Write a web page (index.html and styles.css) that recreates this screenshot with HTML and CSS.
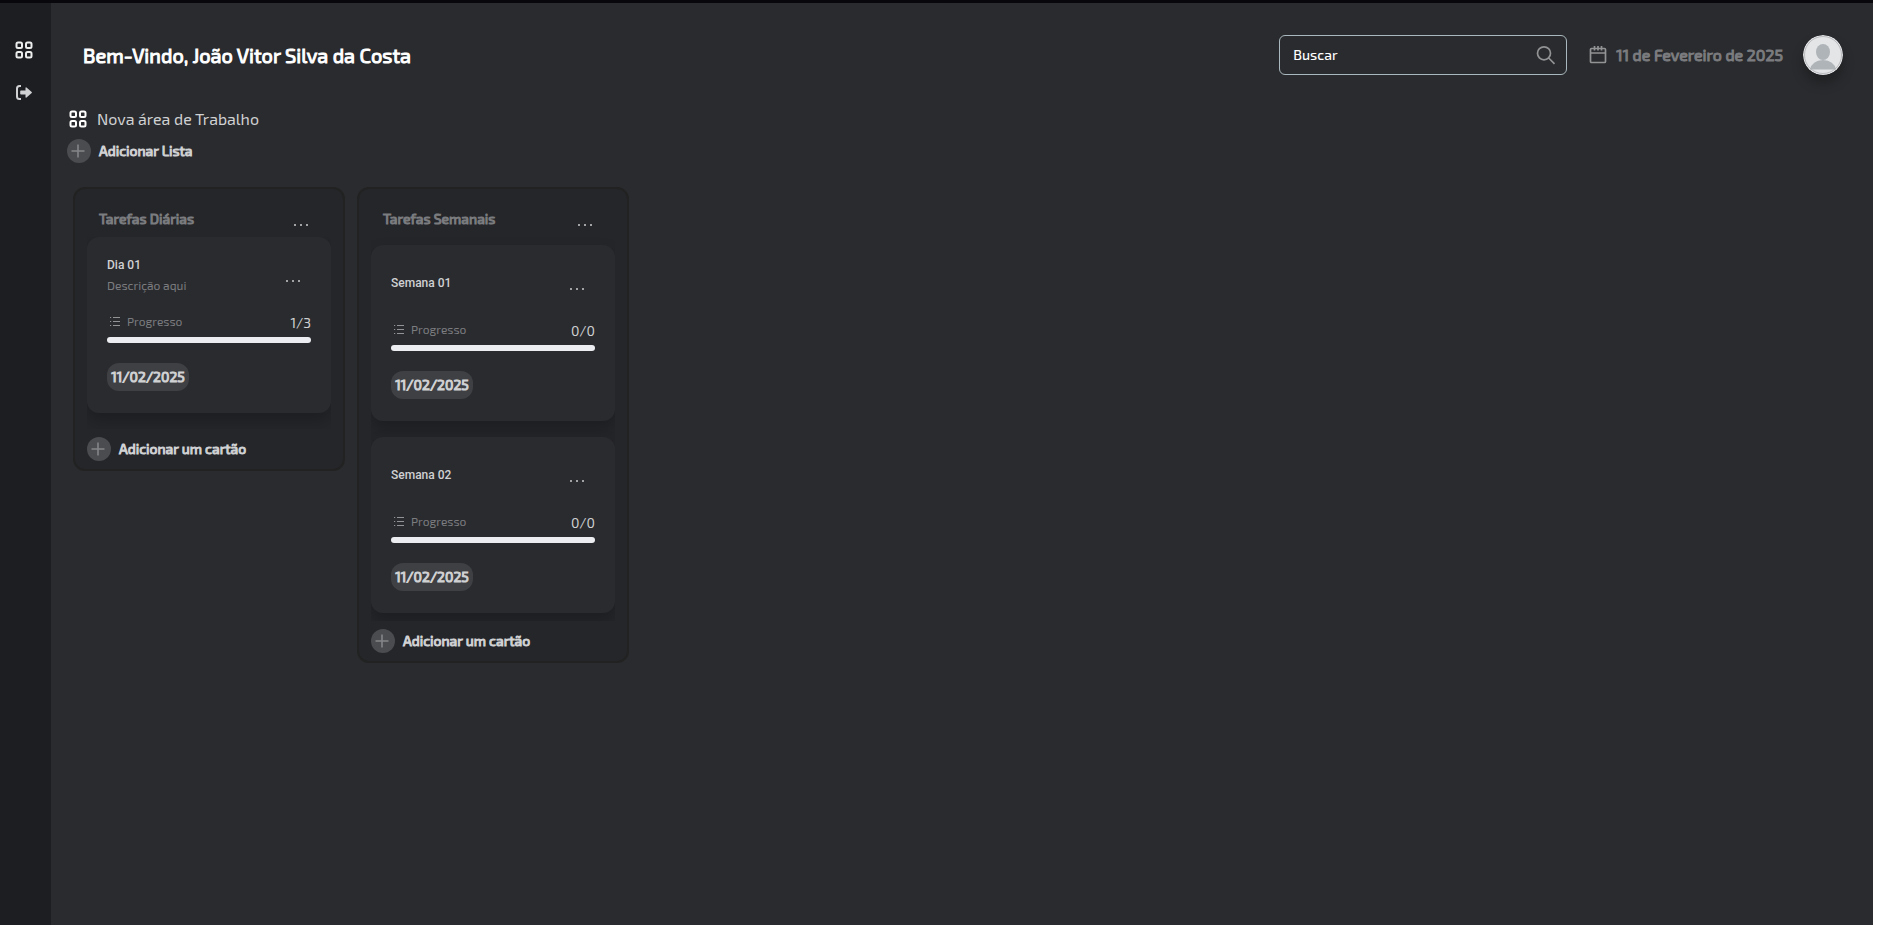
FILE: index.html
```html
<!doctype html>
<html lang="pt-BR">
<head>
<meta charset="utf-8">
<meta name="viewport" content="width=device-width, initial-scale=1">
<title>Área de Trabalho</title>
<link rel="stylesheet" href="styles.css">
</head>
<body>
<svg class="sprite">
	<symbol id="grid" viewBox="0 0 18 18">
		<g fill="none" stroke="currentColor" stroke-width="2">
			<rect x="1.5" y="1.5" width="5.5" height="5.5" rx="1.5"/>
			<rect x="11" y="1.5" width="5.5" height="5.5" rx="1.5"/>
			<rect x="1.5" y="11" width="5.5" height="5.5" rx="1.5"/>
			<rect x="11" y="11" width="5.5" height="5.5" rx="1.5"/>
		</g>
	</symbol>
	<symbol id="plus" viewBox="0 0 24 24">
		<path d="M11 5.500v13M4.500 12h13" stroke="currentColor" stroke-width="1.6" fill="none"/>
	</symbol>
	<symbol id="list" viewBox="0 0 12 12">
		<path d="M4 1.500h7M4 5.500h7M4 9.500h7M1 1.500h1.200M1 5.500h1.200M1 9.500h1.200" stroke="currentColor" stroke-width="1" fill="none"/>
	</symbol>
</svg>
<div class="app">
	<nav class="sidebar">
		<a href="#" aria-label="Áreas"><svg class="icon"><use href="#grid"/></svg></a>
		<a href="#" class="logout" aria-label="Sair">
			<svg class="icon" viewBox="0 0 18 18">
				<path d="M6 3H4.500Q2 3 2 5.500v8Q2 16 4.500 16H6" fill="none" stroke="currentColor" stroke-width="2"/>
				<path d="M6 7.500h4.500V4.800q.2-.8 1-.3l5.200 4.500q.5.500 0 1l-5.200 4.500q-.8.500-1-.3V11.500H6q-.8 0-.8-.8V8.300q0-.8.8-.8z" fill="currentColor"/>
			</svg>
		</a>
	</nav>
	<div class="main">
		<header class="topbar">
			<h1>Bem-Vindo, João Vitor Silva da Costa</h1>
			<form class="search">
				<input type="search" placeholder="Buscar" aria-label="Buscar">
				<button type="button" aria-label="Pesquisar">
					<svg viewBox="0 0 20 20"><path d="M14.500 8.300A6.500 6.500 0 1 1 1.500 8.300a6.500 6.500 0 0 1 13 0zM12.700 13l5.800 5.800" fill="none" stroke="currentColor" stroke-width="1.700"/></svg>
				</button>
			</form>
			<div class="today">
				<svg viewBox="0 0 18 20"><path d="M2.500 3.500h13q1 0 1 1v12q0 1-1 1h-13q-1 0-1-1v-12q0-1 1-1zM1.500 8h15M5.500 1v4.500M9 1v4.500M12.500 1v4.500" fill="none" stroke="currentColor" stroke-width="1.700"/></svg>
				<span>11 de Fevereiro de 2025</span>
			</div>
			<svg class="avatar" viewBox="0 0 40 40">
				<circle cx="20" cy="20" r="20" fill="#e4e5e7"/>
				<ellipse cx="20" cy="17" rx="7" ry="8" fill="#aeb4b8"/>
				<path d="M7 34.500q2-9 13-9.500 11 .5 13 9.500z" fill="#aeb4b8"/>
				<circle cx="20" cy="20" r="18.500" fill="none" stroke="#a9abad" stroke-width=".7"/>
			</svg>
		</header>
		<div class="workspace">
			<svg class="icon"><use href="#grid"/></svg>
			<h2>Nova área de Trabalho</h2>
		</div>
		<button class="add"><svg><use href="#plus"/></svg><span>Adicionar Lista</span></button>
		<div class="board">
			<section class="column">
				<div class="column-head">
					<h3>Tarefas Diárias</h3>
					<button class="more" aria-label="Opções da lista"><i></i><i></i><i></i></button>
				</div>
				<div class="cards described">
					<article class="card">
						<div class="card-head">
							<div>
								<h4>Dia 01</h4>
								<p>Descrição aqui</p>
							</div>
							<button class="more" aria-label="Opções do cartão"><i></i><i></i><i></i></button>
						</div>
						<div class="progress">
							<svg><use href="#list"/></svg>
							<span>Progresso</span>
							<b>1/3</b>
						</div>
						<div class="bar"></div>
						<time class="date">11/02/2025</time>
					</article>
				</div>
				<button class="add"><svg><use href="#plus"/></svg><span>Adicionar um cartão</span></button>
			</section>
			<section class="column">
				<div class="column-head">
					<h3>Tarefas Semanais</h3>
					<button class="more" aria-label="Opções da lista"><i></i><i></i><i></i></button>
				</div>
				<div class="cards">
					<article class="card">
						<div class="card-head">
							<h4>Semana 01</h4>
							<button class="more" aria-label="Opções do cartão"><i></i><i></i><i></i></button>
						</div>
						<div class="progress">
							<svg><use href="#list"/></svg>
							<span>Progresso</span>
							<b>0/0</b>
						</div>
						<div class="bar"></div>
						<time class="date">11/02/2025</time>
					</article>
					<article class="card">
						<div class="card-head">
							<h4>Semana 02</h4>
							<button class="more" aria-label="Opções do cartão"><i></i><i></i><i></i></button>
						</div>
						<div class="progress">
							<svg><use href="#list"/></svg>
							<span>Progresso</span>
							<b>0/0</b>
						</div>
						<div class="bar"></div>
						<time class="date">11/02/2025</time>
					</article>
				</div>
				<button class="add"><svg><use href="#plus"/></svg><span>Adicionar um cartão</span></button>
			</section>
		</div>
	</div>
</div>
</body>
</html>
```
FILE: styles.css
```css
*{
	box-sizing: border-box;
	margin: 0;
	padding: 0;
}
body{
	background: #fff;
	font-family: "Exo 2", Roboto, sans-serif;
	color: #d0d1d3;
}
button{
	background: none;
	border: 0;
	color: inherit;
	font: inherit;
	cursor: pointer;
}
h1, h3, .today, .add, .date{
	font-weight: 400;
	-webkit-text-stroke: 1px currentColor;
}
.sprite{
	display: none;
}
.icon{
	display: block;
	width: 18px;
	height: 18px;
}
.app{
	display: flex;
	min-height: calc(100vh - 8px);
	margin: 0 4px 8px 0;
	border-top: 3px solid #08070c;
	background: #2a2b2e;
}
.sidebar{
	display: flex;
	flex-direction: column;
	gap: 24px;
	width: 51px;
	padding: 38px 15px;
	background: #1d1e22;
}
.sidebar a{
	color: #eceded;
}
.sidebar .logout{
	color: #d0d1d3;
}
.main{
	flex: 1;
	padding: 32px 30px 32px 16px;
}
.topbar{
	display: flex;
	align-items: center;
	height: 40px;
	padding-left: 16px;
}
h1{
	flex: 1;
	font-size: 20px;
	color: #fff;
}
.search{
	display: flex;
	align-items: center;
	width: 288px;
	height: 40px;
	padding: 0 10px 0 13px;
	border: 1px solid #a9b8be;
	border-radius: 6px;
}
.search input{
	flex: 1;
	min-width: 0;
	padding-bottom: 2px;
	border: 0;
	outline: 0;
	background: none;
	color: #fff;
	font: 500 14px "Exo 2", Roboto, sans-serif;
}
.search input::placeholder{
	color: #fff;
}
.search svg{
	display: block;
	width: 20px;
	height: 20px;
	color: #929395;
}
.today{
	display: flex;
	align-items: center;
	gap: 9px;
	margin: 0 20px 0 22px;
	font-size: 16px;
	color: #7b7c7f;
}
.today svg{
	width: 18px;
	height: 20px;
	color: #929395;
}
.avatar{
	width: 40px;
	height: 40px;
	border-radius: 50%;
	box-shadow: 0 8px 12px rgba(0,0,0,.25);
}
.workspace{
	display: flex;
	align-items: center;
	gap: 10px;
	height: 24px;
	margin: 32px 0 8px 2px;
	color: #fff;
}
h2{
	font-size: 16px;
	font-weight: 400;
	color: #d0d1d3;
}
.add{
	display: flex;
	align-items: center;
	gap: 8px;
	height: 24px;
	font-size: 14px;
}
h2, h3, .today span, .add span, .progress span{
	padding-bottom: 2px;
}
.add svg{
	width: 24px;
	height: 24px;
	border-radius: 50%;
	background: #4b4c4f;
	color: #858689;
}
.board{
	display: flex;
	align-items: flex-start;
	flex-wrap: wrap;
	gap: 12px;
	margin: 24px 0 0 6px;
}
.column{
	width: 272px;
	padding: 12px;
	padding-bottom: 8px;
	border: 2px solid #212221;
	border-radius: 12px;
	background: #25262a;
}
.column-head{
	display: flex;
	align-items: center;
	justify-content: space-between;
	height: 36px;
	padding: 0 23px 0 12px;
}
h3{
	font-size: 14px;
	color: #7b7c7f;
}
.more{
	display: flex;
	gap: 4px;
	padding-top: 12px;
}
.more i{
	width: 2px;
	height: 2px;
	background: #a2a3a5;
}
.cards{
	display: flex;
	flex-direction: column;
	gap: 16px;
	padding: 8px 0;
	margin-bottom: 8px;
	overflow: hidden;
}
.described{
	padding: 0 0 16px;
}
.card{
	padding: 20px 20px 22px;
	border-radius: 12px;
	background: #2a2b2f;
	box-shadow: 0 8px 16px rgba(0,0,0,.22);
}
.card-head{
	display: flex;
	align-items: center;
	justify-content: space-between;
	height: 36px;
	padding-right: 11px;
}
h4{
	font-family: Roboto, sans-serif;
	font-size: 12px;
	font-weight: 500;
	line-height: 16px;
}
.card-head p{
	margin-top: 4px;
	font-size: 12px;
	line-height: 16px;
	color: #7b7c7f;
}
.progress{
	display: flex;
	align-items: center;
	height: 20px;
	margin: 19px 0 5px 2px;
	font-size: 12px;
	color: #7b7c7f;
}
.progress svg{
	width: 12px;
	height: 12px;
	margin-right: 6px;
	color: #929395;
}
.progress b{
	margin-left: auto;
	font-size: 14px;
	font-weight: 400;
	color: #d0d1d3;
}
.bar{
	height: 6px;
	border-radius: 3px;
	background: #ebedf0;
}
.date{
	display: flex;
	align-items: center;
	justify-content: center;
	width: 82px;
	height: 28px;
	margin-top: 20px;
	padding-bottom: 2px;
	border-radius: 12px;
	background: #3f4043;
	font-size: 14px;
}
```
